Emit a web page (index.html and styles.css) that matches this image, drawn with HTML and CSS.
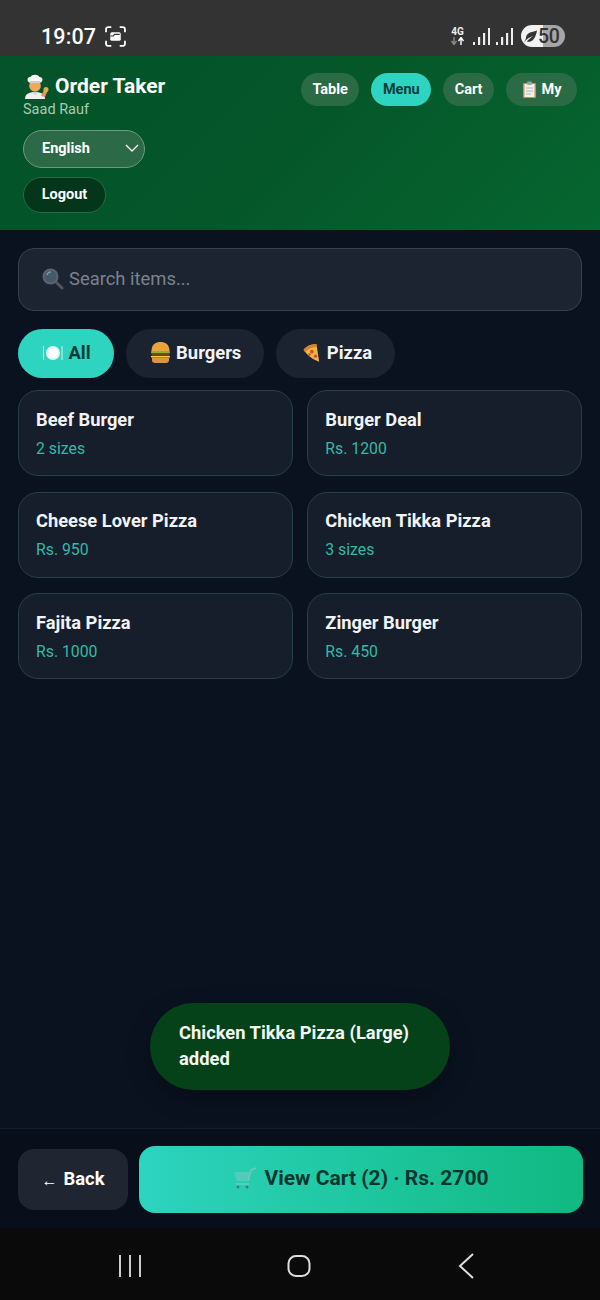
FILE: index.html
```html
<!DOCTYPE html>
<html lang="en">
<head>
<meta charset="utf-8">
<title>Order Taker</title>
<link rel="stylesheet" href="styles.css">
</head>
<body>
<div class="phone">
  <div class="status">
    <div class="status-left">
      <span class="clock">19:07</span>
      <svg class="shot" width="21" height="21" viewBox="0 0 20 20" fill="none" stroke="#fff" stroke-width="1.7"><path d="M1 6V3a2 2 0 0 1 2-2h3M14 1h3a2 2 0 0 1 2 2v3M19 14v3a2 2 0 0 1-2 2h-3M6 19H3a2 2 0 0 1-2-2v-3"/><rect x="5" y="6" width="10" height="8" rx="1.500" fill="#fff" stroke="none"/><path d="M5 9.500h3l1-1.500h5" stroke="#333" stroke-width="1.100"/></svg>
    </div>
    <div class="status-right">
      <span class="net"><b>4G</b><svg width="15" height="8" viewBox="0 0 15 8"><path d="M4 0v7M1.500 4 4 7.500 6.500 4" stroke="#8a8a8a" stroke-width="1.400" fill="none"/><path d="M11 8V1M8.500 4 11 .5 13.500 4" stroke="#fff" stroke-width="1.400" fill="none"/></svg></span>
      <svg width="17" height="18" viewBox="0 0 17 18" fill="#eee"><rect x="0" y="15" width="2" height="3"/><rect x="5" y="10" width="2.200" height="8"/><rect x="10" y="6" width="2.200" height="12"/><rect x="15" y="1" width="2" height="17"/></svg>
      <svg width="17" height="18" viewBox="0 0 17 18" fill="#eee"><rect x="0" y="15" width="2" height="3"/><rect x="5" y="10" width="2.200" height="8"/><rect x="10" y="6" width="2.200" height="12"/><rect x="15" y="1" width="2" height="17"/></svg>
      <span class="battery">
        <svg width="15" height="15" viewBox="0 0 16 15"><path d="M1 14C4 10 7 8 11 7 8 9 6 10.500 4 13c5 1 9-2 11-12C11 3 3 2 3 10z" fill="#333"/></svg>
        <span>50</span>
      </span>
    </div>
  </div>

  <header class="head">
    <div class="brand">
      <h1 class="title">
        <svg class="emoji-chef" width="26" height="26" viewBox="0 0 26 26"><path d="M2 26c0-5 4-7 10-7s10 2 10 7z" fill="#eef1f2"/><path d="M9 19l3 3.500 3-3.500z" fill="#d0d4d6"/><circle cx="12" cy="13" r="5.800" fill="#f0a958"/><path d="M6.500 9.500C3.500 8.500 4 3.500 7.500 4 9 1 15 1 16.500 4 20 3.500 20.500 8.500 17.500 9.500z" fill="#fafafa"/><rect x="6.500" y="8" width="11" height="2.200" fill="#c9cfd3"/><path d="M18 23l3-6 3.500 1-2.500 6z" fill="#e39a45"/><circle cx="23" cy="16.500" r="2.500" fill="#eda552"/></svg>
        <span>Order Taker</span>
      </h1>
      <div class="user">Saad Rauf</div>
      <div class="lang">
        <span>English</span>
        <svg width="14" height="8" viewBox="0 0 14 8" fill="none" stroke="#fff" stroke-width="1.300"><path d="M1 1l6 6 6-6"/></svg>
      </div>
      <div class="logout">Logout</div>
    </div>
    <nav class="tabs">
      <a class="tab">Table</a>
      <a class="tab tab-on">Menu</a>
      <a class="tab">Cart</a>
      <a class="tab tab-my">
        <svg width="15" height="17" viewBox="0 0 15 17"><rect x="1" y="2" width="13" height="15" rx="1" fill="#c98d5a"/><rect x="2.500" y="3" width="10" height="13" fill="#f2f0ea"/><rect x="5" y="0.500" width="5" height="3.500" rx="1" fill="#9aa3a8"/><path d="M4 7h7M4 10h7M4 13h5" stroke="#a9b6c6" stroke-width="1"/></svg>
        <span>My</span>
      </a>
    </nav>
  </header>

  <main class="body">
    <div class="search">
      <svg width="22" height="22" viewBox="0 0 22 22"><path d="M13 13l7 7" stroke="#4f5660" stroke-width="3" stroke-linecap="round"/><circle cx="8.500" cy="8.500" r="7" fill="#44596b" stroke="#5b636d" stroke-width="2"/><path d="M5 7a4 4 0 0 1 4-3" stroke="#7d96a6" stroke-width="1.500" fill="none"/></svg>
      <span>Search items...</span>
    </div>

    <div class="chips">
      <div class="chip chip-on">
        <svg width="22" height="22" viewBox="0 0 22 22"><circle cx="12" cy="11" r="7" fill="#e9f2f1"/><circle cx="12" cy="11" r="4.800" fill="#fff"/><path d="M2.500 4v14M21 4v14" stroke="#bfe6e0" stroke-width="1.200"/></svg>
        <span>All</span>
      </div>
      <div class="chip">
        <svg width="22" height="23" viewBox="0 0 22 23"><path d="M2.500 10C2.500 3 7 1 11.500 1s9 2 9 9z" fill="#eda33b"/><rect x="2" y="10" width="19" height="2.500" rx="1" fill="#8fae3c"/><rect x="2.500" y="12.500" width="18" height="3" rx="1" fill="#7a3f1d"/><rect x="2" y="15" width="19" height="1.500" fill="#f2c14e"/><path d="M3 16.500h17v2.500a3 3 0 0 1-3 3H6a3 3 0 0 1-3-3z" fill="#e0943a"/></svg>
        <span>Burgers</span>
      </div>
      <div class="chip">
        <svg width="22" height="22" viewBox="-3 0 24 21"><path d="M2 7C6 2 11 1 16 1l3 19C12 18 6 13 2 7z" fill="#f2b544"/><path d="M2 7C6 2 11 1 16 1l.6 3C11 4 7 6 3.500 9.500z" fill="#d9822b"/><circle cx="11" cy="9" r="2" fill="#d9472b"/><circle cx="15" cy="14" r="1.800" fill="#d9472b"/><circle cx="8.500" cy="12" r="1.300" fill="#d9472b"/></svg>
        <span>Pizza</span>
      </div>
    </div>

    <div class="grid">
      <div class="card"><div class="name">Beef Burger</div><div class="price">2 sizes</div></div>
      <div class="card"><div class="name">Burger Deal</div><div class="price">Rs. 1200</div></div>
      <div class="card"><div class="name">Cheese Lover Pizza</div><div class="price">Rs. 950</div></div>
      <div class="card"><div class="name">Chicken Tikka Pizza</div><div class="price">3 sizes</div></div>
      <div class="card"><div class="name">Fajita Pizza</div><div class="price">Rs. 1000</div></div>
      <div class="card"><div class="name">Zinger Burger</div><div class="price">Rs. 450</div></div>
    </div>

    <div class="toast">Chicken Tikka Pizza (Large) added</div>
  </main>

  <footer class="foot">
    <div class="back"><span class="arrow">←</span><span>Back</span></div>
    <div class="view">
      <svg width="24" height="24" viewBox="0 0 24 24" fill="none"><path d="M1 6h16l-2 9H4z" fill="#5fc9bd" opacity=".8"/><path d="M15 15l3-11 5-2" stroke="#6ecabf" stroke-width="1.500"/><circle cx="5" cy="21" r="1.500" fill="#3a7f78"/><circle cx="14" cy="21" r="1.500" fill="#3a7f78"/><path d="M3 18h13" stroke="#6ecabf" stroke-width="1.500"/></svg>
      <span>View Cart (2) · Rs. 2700</span>
    </div>
  </footer>

  <div class="nav">
    <svg width="24" height="24" viewBox="0 0 24 24" stroke="#ccc" stroke-width="2"><path d="M3 1v22M13 1v22M23 1v22"/></svg>
    <svg width="24" height="24" viewBox="0 0 24 24" fill="none" stroke="#ddd" stroke-width="2"><rect x="1.500" y="2" width="21" height="20" rx="7.500"/></svg>
    <svg width="18" height="26" viewBox="0 0 18 26" fill="none" stroke="#ddd" stroke-width="2"><path d="M16 1 3 13l13 12"/></svg>
  </div>
</div>
</body>
</html>
```
FILE: styles.css
```css
* { box-sizing: border-box; }
html, body { margin: 0; padding: 0; }
body { font-family: Roboto, "Liberation Sans", sans-serif; background: #0a1220; }
.phone { width: 600px; height: 1300px; display: flex; flex-direction: column; position: relative; overflow: hidden; }

.status { height: 56px; background: #333333; display: flex; align-items: center; justify-content: space-between; padding: 16px 35px 0 41px; flex: none; }
.status-left { display: flex; align-items: center; gap: 9px; }
.clock { color: #fff; font-size: 21.5px; font-weight: 500; letter-spacing: .1px; }
.status-right { display: flex; align-items: center; gap: 6px; }
.net { display: flex; flex-direction: column; align-items: center; color: #eee; width: 15px; margin-right: 2px; }
.net b { font-size: 10px; line-height: 10px; font-weight: 700; }
.battery { width: 44px; height: 22px; border-radius: 11px; margin-left: 2px; background: linear-gradient(90deg, #f2f2f2 50%, #a6a6a6 50%); display: flex; align-items: center; padding-left: 2px; color: #333; font-size: 19.5px; font-weight: 500; letter-spacing: -.3px; }

.head { height: 174px; flex: none; background: linear-gradient(135deg, #04522a 0%, #05572a 50%, #06662f 100%); display: flex; justify-content: space-between; padding: 17px 23px 0 23px; }
.brand { display: flex; flex-direction: column; align-items: flex-start; }
.title { margin: 0; color: #fff; font-size: 21px; font-weight: 700; line-height: 26px; display: flex; align-items: center; gap: 6px; }
.user { color: #a5cdb3; font-size: 14.5px; line-height: 18px; margin-top: 2px; }
.lang { width: 122px; height: 38px; margin-top: 11px; border-radius: 19px; background: #2c6a47; border: 1px solid #6c9b7d; display: flex; align-items: center; justify-content: space-between; padding: 0 5px 2px 18px; color: #fff; font-size: 14.5px; font-weight: 700; }
.logout { height: 36px; width: 83px; margin-top: 9px; border-radius: 18px; background: #03361a; border: 1px solid #2a6a45; display: flex; align-items: center; justify-content: center; padding-bottom: 2px; color: #fff; font-size: 14.5px; font-weight: 700; }
.tabs { display: flex; gap: 12px; height: 33px; }
.tab { height: 33px; padding: 0 11.5px; border-radius: 17px; background: #2a6a45; color: #fff; font-size: 14.5px; font-weight: 700; display: flex; align-items: center; gap: 5px; }
.tab-on { background: #2dd4bf; color: #063a3c; }
.tab-my { padding: 0 15.5px; }

.body { flex: 1; padding: 18px 18px 0; position: relative; }
.search { height: 63px; border-radius: 16px; background: #1c2432; border: 1px solid #36404e; display: flex; align-items: center; gap: 5px; padding: 0 23px 2px; color: #7b828d; font-size: 18.4px; }
.chips { display: flex; gap: 12px; margin-top: 18px; }
.chip { height: 49px; border-radius: 25px; background: #1b2230; color: #f1f3f5; font-size: 18.4px; font-weight: 700; display: flex; align-items: center; gap: 5.5px; padding: 0 23px 2px; }
.chip-on { background: #2dd4bf; color: #053b36; }
.grid { display: grid; grid-template-columns: 1fr 1fr; column-gap: 14.6px; row-gap: 15.6px; margin-top: 12px; }
.card { height: 86px; border-radius: 20px; background: #161e2b; border: 1px solid #26404b; padding: 16.7px 17px 0; }
.name { color: #f1f3f7; font-size: 18.3px; font-weight: 700; line-height: 24px; }
.price { color: #35b8a6; font-size: 15.8px; line-height: 20px; margin-top: 7px; }
.toast { position: absolute; left: 150px; top: 773px; width: 300px; height: 87px; border-radius: 44px; background: #064219; color: #f2f8f3; font-size: 18.35px; font-weight: 700; line-height: 26px; padding: 17px 29px; box-shadow: 0 8px 24px rgba(0,0,0,.3); }

.foot { height: 100px; flex: none; background: #090f1a; border-top: 1px solid #151d2a; display: flex; align-items: center; gap: 11px; padding: 2px 17px 0 18px; }
.back { width: 110px; height: 61px; border-radius: 16px; background: #1f2531; color: #fff; font-size: 18.4px; font-weight: 700; display: flex; align-items: center; justify-content: center; gap: 6px; padding-bottom: 3px; }
.arrow { font-size: 16px; padding-top: 5px; }
.view { flex: 1; height: 67px; border-radius: 16px; background: linear-gradient(90deg, #2dd4bf, #10b981); color: #06352f; font-size: 21px; font-weight: 700; display: flex; align-items: center; justify-content: center; gap: 7px; padding-bottom: 3px; }

.nav { height: 72px; flex: none; background: #0a0a0a; display: flex; align-items: center; padding: 4px 125px 0 117px; justify-content: space-between; }
```
